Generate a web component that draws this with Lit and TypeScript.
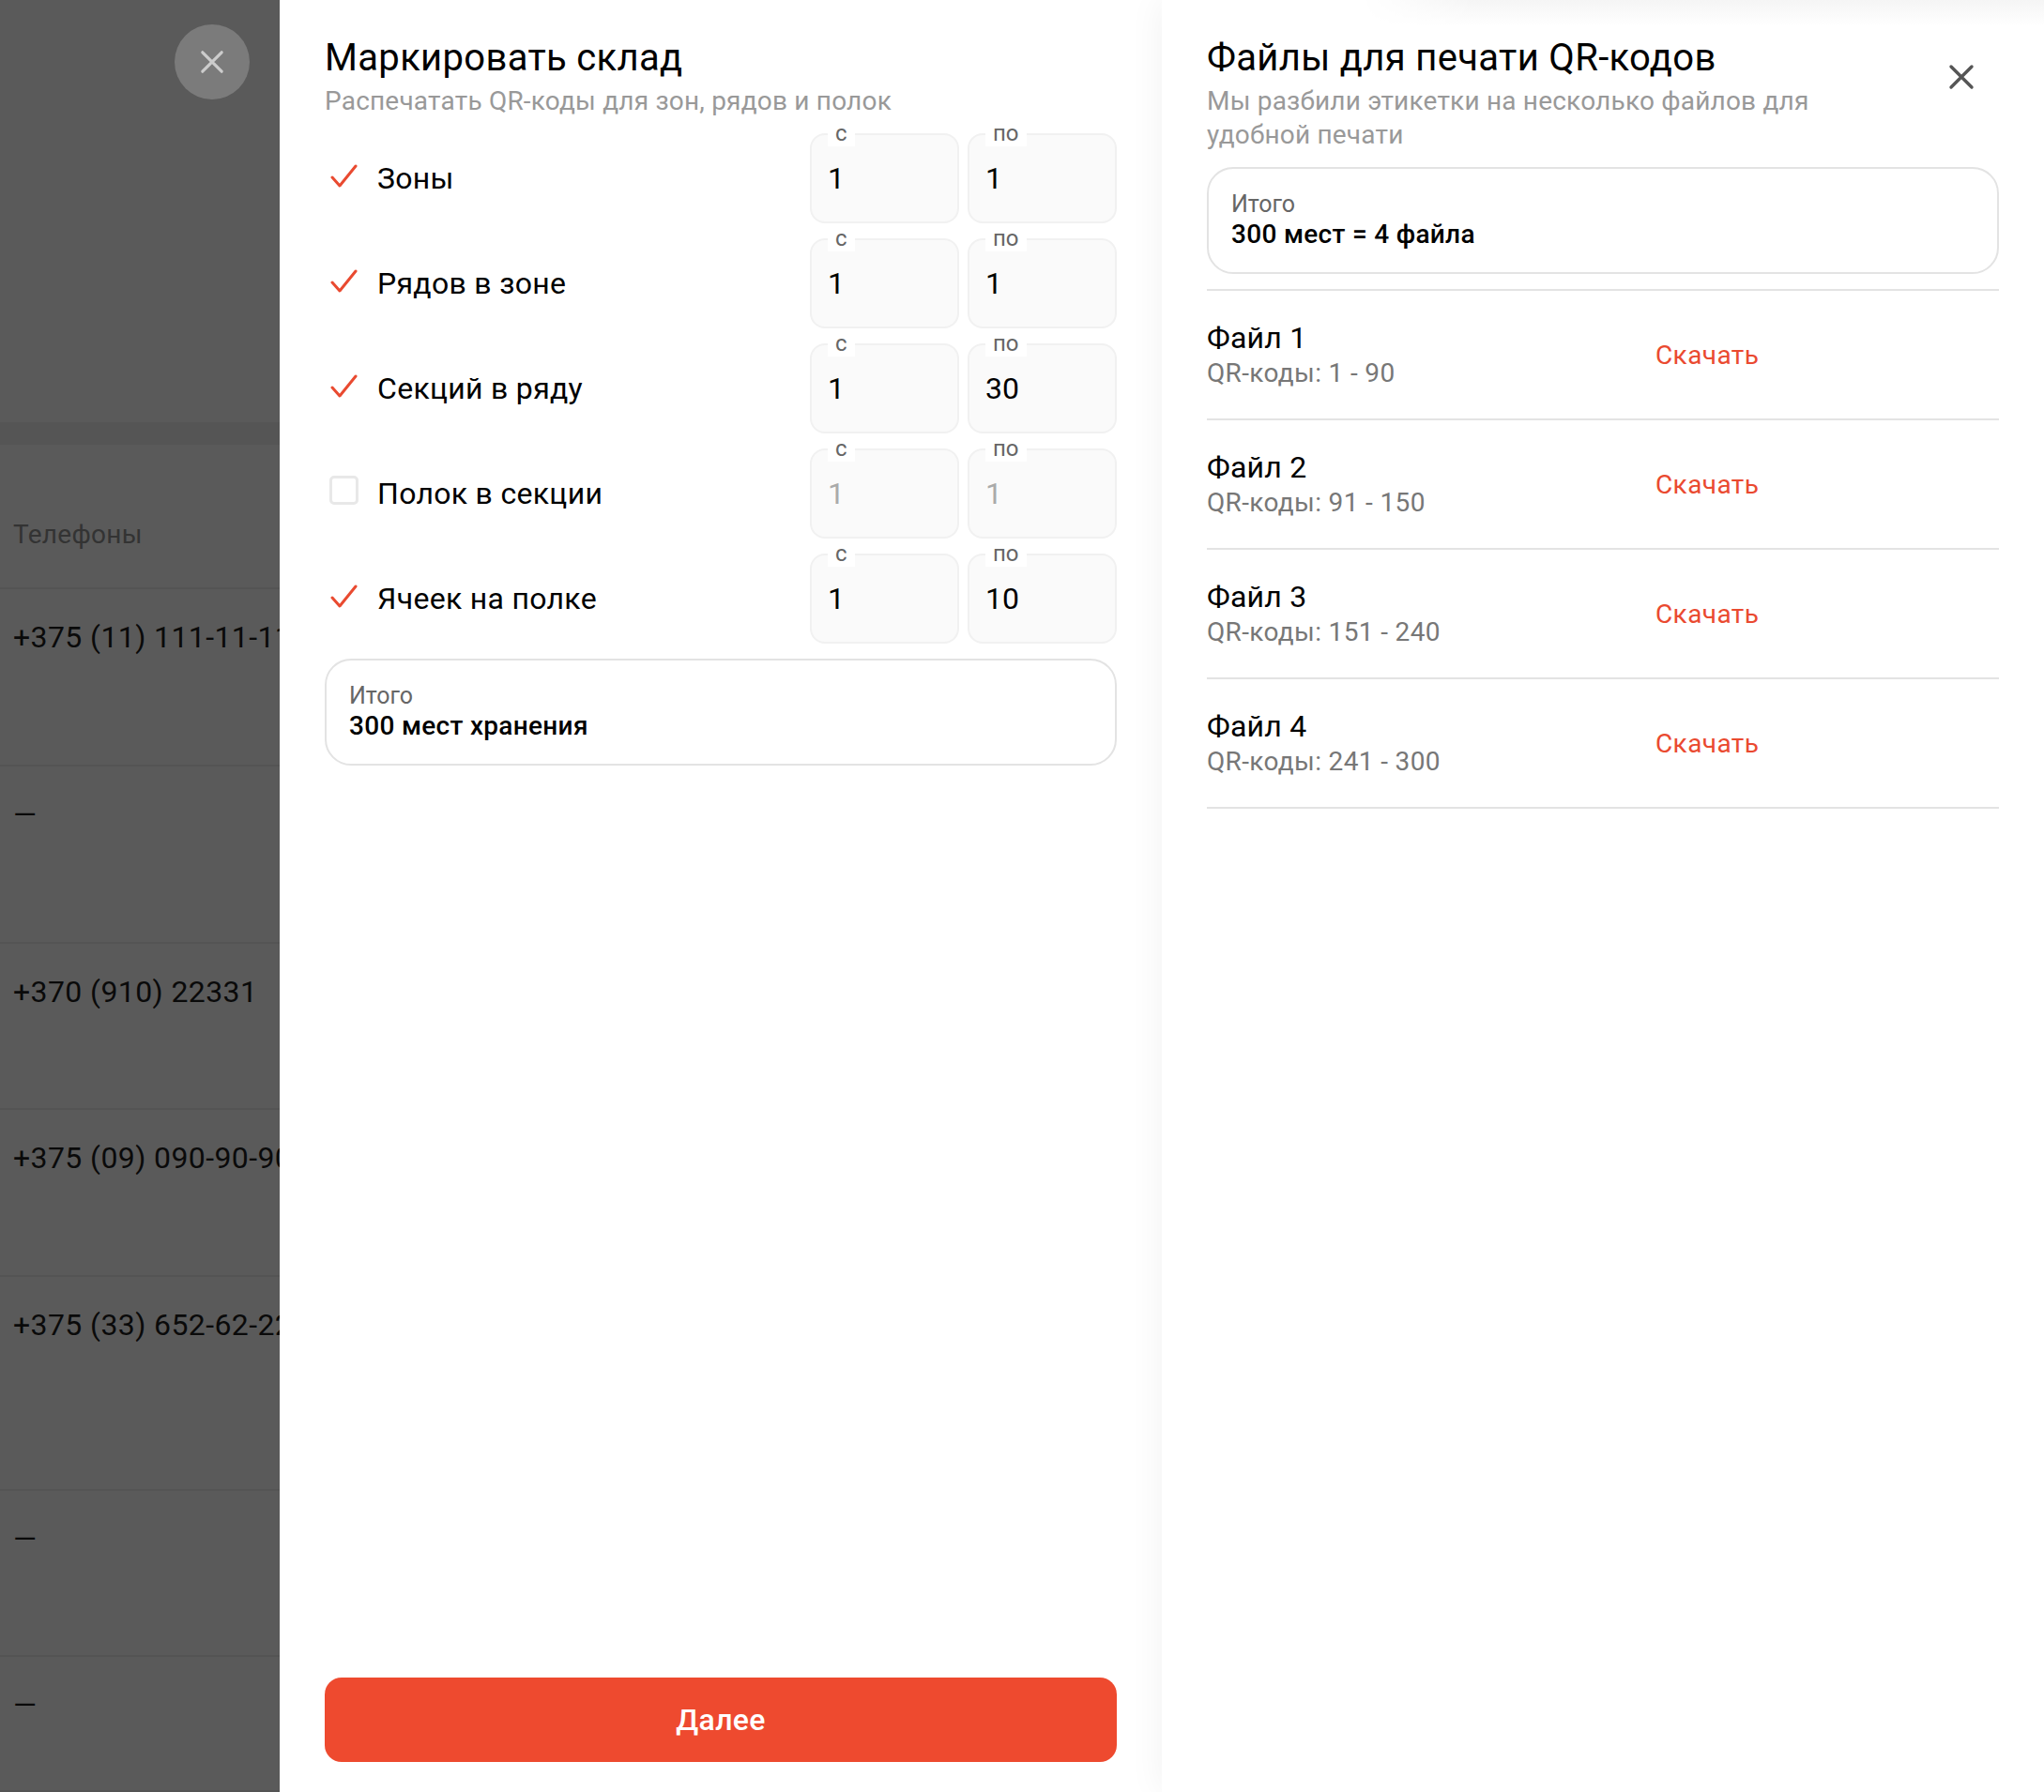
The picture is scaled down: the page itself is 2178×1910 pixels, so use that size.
import { LitElement, html, css, svg } from "lit";
import { customElement } from "lit/decorators.js";

const xIcon = (c: string, s: number, w: number) => html`<svg width="${s}" height="${s}" viewBox="0 0 28 28" fill="none" stroke="${c}" stroke-width="${w}" stroke-linecap="round">${svg`<path d="M3 3 25 25M25 3 3 25"/>`}</svg>`;

const rows = [
  { label: "Зоны", on: true, a: "1", b: "1" },
  { label: "Рядов в зоне", on: true, a: "1", b: "1" },
  { label: "Секций в ряду", on: true, a: "1", b: "30" },
  { label: "Полок в секции", on: false, a: "1", b: "1" },
  { label: "Ячеек на полке", on: true, a: "1", b: "10" },
];
const files = [
  { t: "Файл 1", s: "QR-коды: 1 - 90" },
  { t: "Файл 2", s: "QR-коды: 91 - 150" },
  { t: "Файл 3", s: "QR-коды: 151 - 240" },
  { t: "Файл 4", s: "QR-коды: 241 - 300" },
];
const bg = [
  { h: 154, t: "Телефоны", c: "head" },
  { h: 189, t: "+375 (11) 111-11-111" },
  { h: 189, t: "—", c: "dash" },
  { h: 177, t: "+370 (910) 22331" },
  { h: 178, t: "+375 (09) 090-90-90" },
  { h: 228, t: "+375 (33) 652-62-22" },
  { h: 177, t: "—", c: "dash" },
  { h: 144, t: "—", c: "dash" },
];

@customElement("app-root")
export class AppRoot extends LitElement {
  static styles = css`
    :host { display: block; width: 2178px; height: 1910px; overflow: hidden; font-family: Roboto, "Liberation Sans", sans-serif; color: #000; }
    * { box-sizing: border-box; }
    .page { display: flex; height: 1910px; }
    .dim { width: 298px; flex: none; background: #5a5a5a; overflow: hidden; position: relative; display: flex; flex-direction: column; }
    .top { height: 450px; flex: none; display: flex; justify-content: flex-end; align-items: flex-start; padding: 26px 32px 0 0; }
    .close { width: 80px; height: 80px; border-radius: 50%; background: #7b7b7b; display: flex; align-items: center; justify-content: center; }
    .band { height: 24px; flex: none; background: #555; }
    .bgrow { flex: none; white-space: nowrap; font-size: 32px; line-height: 38px; padding: 32px 0 0 14px; color: #0a0a0a; letter-spacing: .4px; border-bottom: 2px solid #545454; }
    .bgrow.head { font-size: 28px; color: #333; padding-top: 77px; letter-spacing: .3px; }
    .bgrow.dash { padding-top: 32px; }
    .panel { width: 940px; flex: none; background: #fff; padding: 38px 48px 32px; display: flex; flex-direction: column; position: relative; }
    .panel.right { box-shadow: 0 0 36px rgba(0,0,0,.06); }
    .topfade { position: absolute; top: 0; left: 212px; right: 0; height: 28px; background: linear-gradient(#f5f5f5, #fff); -webkit-mask-image: linear-gradient(90deg, transparent, #000 120px); mask-image: linear-gradient(90deg, transparent, #000 120px); }
    .title { font-size: 40px; line-height: 48px; font-weight: 400; letter-spacing: .33px; position: relative; }
    .sub { font-size: 28px; line-height: 36px; color: #999; letter-spacing: .2px; margin-top: 4px; position: relative; }
    .right .sub { width: 720px; }
    .x { position: absolute; left: 838px; top: 68px; width: 28px; height: 28px; }
    .rows { display: flex; flex-direction: column; gap: 16.5px; margin-top: 16px; }
    .row { display: flex; align-items: center; height: 95.5px; }
    .ck { width: 30px; height: 32px; margin: -6px 20px 0 6px; flex: none; }
    .box { border: 3px solid #e8e8e8; border-radius: 5px; width: 31px; height: 31px; background: #fff; margin-left: -1px; }
    .lbl { font-size: 32px; flex: 1; letter-spacing: .3px; }
    .field { position: relative; width: 159px; height: 95.5px; background: #fafafa; border: 2px solid #f1f1f1; border-radius: 16px; font-size: 32px; line-height: 92px; padding-left: 17px; margin-left: 9px; }
    .field.off { color: #aaa; }
    .cap { position: absolute; top: -16px; left: 17px; padding: 0 8px; background: #fff; font-size: 24px; line-height: 28px; color: #666; }
    .sum { border: 2px solid #e3e3e3; border-radius: 28px; height: 114px; padding: 22px 24px; margin-top: 16px; }
    .sum .k { font-size: 25px; line-height: 32px; color: #666; }
    .sum .v { font-size: 28px; line-height: 32px; font-weight: 500; letter-spacing: .3px; }
    .grow { flex: 1; }
    .btn { height: 90px; background: #ee4a2f; border-radius: 18px; color: #fff; font-size: 32px; font-weight: 500; letter-spacing: .3px; display: flex; align-items: center; justify-content: center; }
    .list { margin-top: 16px; border-top: 2px solid #e3e3e3; }
    .file { height: 138px; border-bottom: 2px solid #e3e3e3; display: flex; align-items: center; }
    .fl { width: 478px; flex: none; }
    .ft { font-size: 32px; line-height: 40px; letter-spacing: .25px; }
    .fs { font-size: 28px; line-height: 36px; color: #777; letter-spacing: .35px; }
    .dl { font-size: 28px; color: #ea4a30; letter-spacing: .4px; }
  `;
  render() {
    return html`<div class="page">
      <div class="dim">
        <div class="top"><div class="close">${xIcon("#ccc", 26, 3.4)}</div></div>
        <div class="band"></div>
        ${bg.map((r) => html`<div class="bgrow ${r.c ?? ""}" style="height:${r.h}px">${r.t}</div>`)}
      </div>
      <div class="panel">
        <div class="title">Маркировать склад</div>
        <div class="sub">Распечатать QR-коды для зон, рядов и полок</div>
        <div class="rows">
          ${rows.map((r) => html`<div class="row">
            <div class="ck">${r.on
              ? html`<svg width="30" height="32" viewBox="0 0 30 32" fill="none" stroke="#e94a30" stroke-width="3" stroke-linecap="round" stroke-linejoin="round">${svg`<path d="M2 18 10 27 27 6"/>`}</svg>`
              : html`<div class="box"></div>`}</div>
            <div class="lbl">${r.label}</div>
            <div class="field ${r.on ? "" : "off"}"><span class="cap">с</span>${r.a}</div>
            <div class="field ${r.on ? "" : "off"}"><span class="cap">по</span>${r.b}</div>
          </div>`)}
        </div>
        <div class="sum"><div class="k">Итого</div><div class="v">300 мест хранения</div></div>
        <div class="grow"></div>
        <div class="btn">Далее</div>
      </div>
      <div class="panel right">
        <div class="topfade"></div>
        <div class="title">Файлы для печати QR-кодов</div>
        <div class="sub">Мы разбили этикетки на несколько файлов для удобной печати</div>
        <div class="x">${xIcon("#555", 28, 3.4)}</div>
        <div class="sum"><div class="k">Итого</div><div class="v">300 мест = 4 файла</div></div>
        <div class="list">
          ${files.map((f) => html`<div class="file">
            <div class="fl"><div class="ft">${f.t}</div><div class="fs">${f.s}</div></div>
            <div class="dl">Скачать</div>
          </div>`)}
        </div>
      </div>
    </div>`;
  }
}
